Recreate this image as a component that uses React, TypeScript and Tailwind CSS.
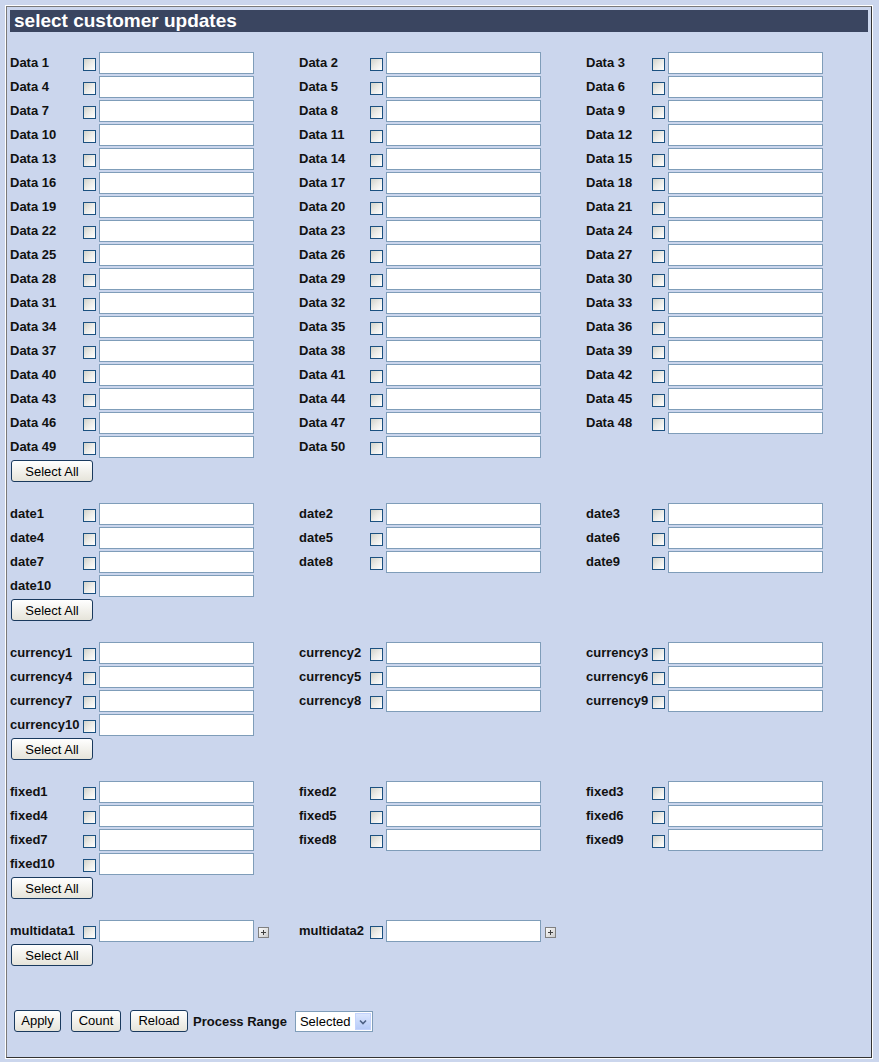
import React from 'react';

const labelW = ['w-[73px]', 'w-[71px]', 'w-[66px]'];

const range = (prefix: string, n: number) =>
  Array.from({ length: n }, (_, i) => `${prefix}${i + 1}`);

const sections: { items: string[]; plus?: boolean }[] = [
  { items: range('Data ', 50) },
  { items: range('date', 10) },
  { items: range('currency', 10) },
  { items: range('fixed', 10) },
  { items: range('multidata', 2), plus: true },
];

const Checkbox: React.FC = () => (
  <input
    type="checkbox"
    className="appearance-none w-[13px] h-[13px] m-0 mr-[3px] mt-[2px] shrink-0 border border-[#1c5180] bg-linear-to-br from-[#d2d2ca] via-[#ececE8] to-white"
  />
);

const PlusIcon: React.FC = () => (
  <svg width="11" height="11" viewBox="0 0 11 11" className="ml-[4px] mt-[2px] shrink-0">
    <defs>
      <linearGradient id="pg" x1="0" y1="0" x2="1" y2="1">
        <stop offset="0" stopColor="#ffffff" />
        <stop offset="1" stopColor="#c8c8c8" />
      </linearGradient>
    </defs>
    <rect x="0.5" y="0.5" width="10" height="10" fill="url(#pg)" stroke="#808080" />
    <path d="M3 5.5h5M5.5 3v5" stroke="#404040" strokeWidth="1" />
  </svg>
);

const Button: React.FC<{ label: string; className?: string }> = ({ label, className }) => (
  <button
    type="button"
    className={`block h-[22px] rounded-[3px] border border-[#1a3a5e] bg-linear-to-b from-white to-[#e6e4da] text-[13px] text-black leading-none ${className ?? ''}`}
  >
    {label}
  </button>
);

const Field: React.FC<{ name: string; col: number; plus?: boolean }> = ({ name, col, plus }) => (
  <div className="h-[24px] flex items-center">
    <span className={`${labelW[col]} shrink-0 text-[13px] font-bold text-[#111] whitespace-nowrap`}>{name}</span>
    <Checkbox />
    <input type="text" className="w-[155px] h-[22px] border border-[#7f9db9] bg-white outline-none shrink-0" />
    {plus && <PlusIcon />}
  </div>
);

export default function App() {
  return (
    <div className="min-h-[1062px] bg-[#cbd6ed] pt-[5px] pl-[5px] font-['Liberation_Sans',Arial,sans-serif]">
      <div className="w-[868px] border border-white">
        <div className="border border-[#333] border-l-[#7a7a7a] border-t-[#7a7a7a] px-[3px] pt-[3px] pb-[25px]">
          <div className="h-[22px] bg-[#3a4560] text-white font-bold text-[19px] leading-[22px] pl-[4px]">
            select customer updates
          </div>

          {sections.map((s, si) => (
            <div key={si} className={si === 0 ? 'mt-[19px]' : 'mt-[20px]'}>
              <div className="grid grid-cols-[289px_287px_1fr]">
                {s.items.map((name, i) => (
                  <Field key={name} name={name} col={i % 3} plus={s.plus} />
                ))}
              </div>
              <Button label="Select All" className="w-[82px] mt-[1px] ml-[1px]" />
            </div>
          ))}

          <div className="mt-[43px] flex items-center pl-[4px]">
            <Button label="Apply" className="w-[47px]" />
            <Button label="Count" className="w-[50px] ml-[10px]" />
            <Button label="Reload" className="w-[58px] ml-[9px]" />
            <span className="ml-[5px] text-[13px] font-bold text-[#111] mt-[3px]">Process Range</span>
            <div className="ml-[8px] mt-[2px] w-[78px] h-[21px] border border-[#7f9db9] bg-white flex items-center">
              <span className="flex-1 pl-[4px] text-[13px] text-black">Selected</span>
              <div className="w-[16px] h-[17px] mr-[1px] bg-linear-to-b from-[#dbe6fe] to-[#b7cbf8] border border-[#c3d3fd] flex items-center justify-center">
                <svg width="8" height="6" viewBox="0 0 8 6">
                  <path d="M1 1.5l3 3 3-3" fill="none" stroke="#4d6185" strokeWidth="1.6" />
                </svg>
              </div>
            </div>
          </div>
        </div>
      </div>
    </div>
  );
}
